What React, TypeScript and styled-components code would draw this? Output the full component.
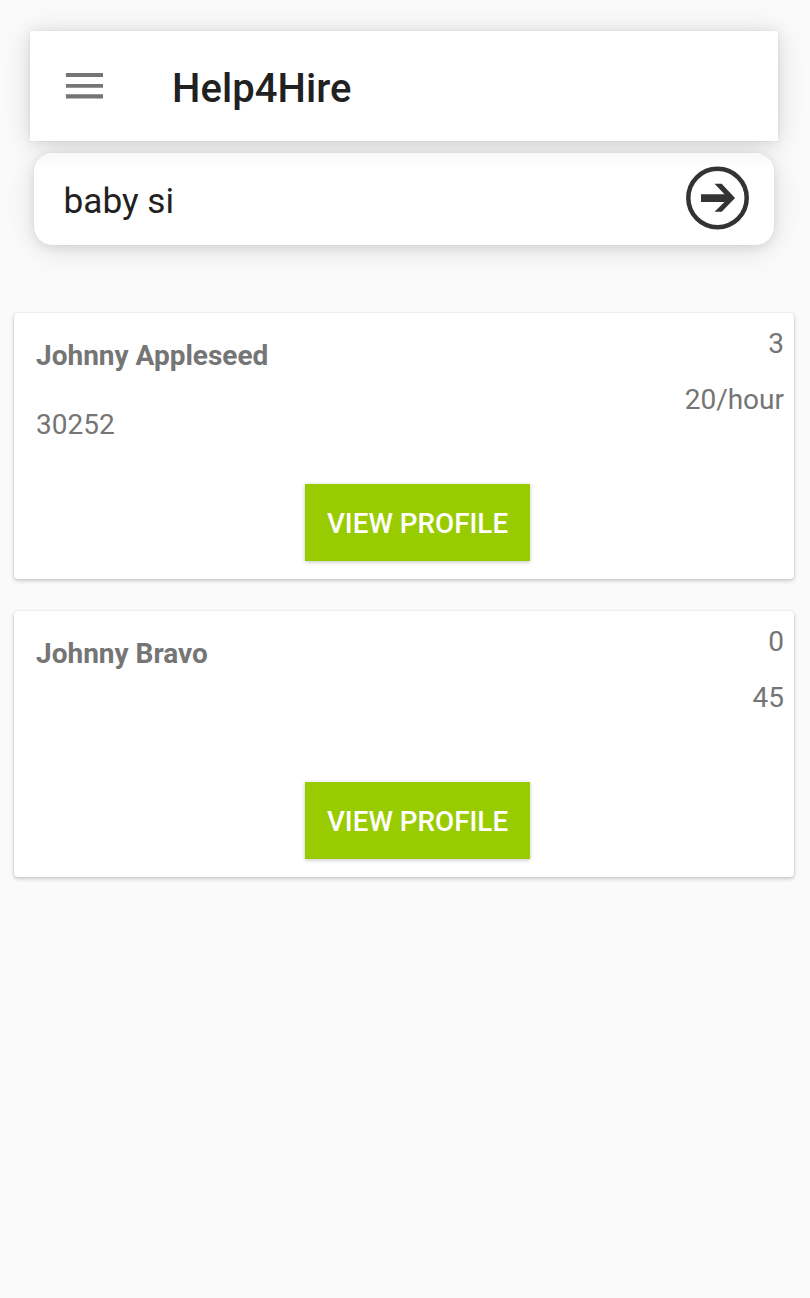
import React from "react";
import styled, { createGlobalStyle } from "styled-components";

const GlobalStyle = createGlobalStyle`
  * { box-sizing: border-box; }
  body { margin: 0; background: #fafafa; font-family: Roboto, sans-serif; }
`;

const Screen = styled.main`
  min-height: 1298px;
  padding: 31px 16px 0 14px;
  background: #fafafa;
  overflow: hidden;
`;

const TopArea = styled.div`
  isolation: isolate;
  display: flex;
  flex-direction: column;
  align-items: stretch;
  gap: 12px;
  margin: 0 16px 68px 16px;
`;

const AppBar = styled.header`
  position: relative;
  display: flex;
  align-items: center;
  height: 110px;
  padding: 6px 35px 0;
  background: #fff;

  &::before {
    content: "";
    position: absolute;
    inset: 0;
    z-index: -1;
    box-shadow: 0 0 0 1px rgba(0, 0, 0, 0.02), 0 1px 12px rgba(0, 0, 0, 0.09), 0 3px 30px rgba(0, 0, 0, 0.11);
  }
`;

const MenuButton = styled.button`
  display: flex;
  width: 38px;
  height: 28px;
  margin: 0 69px 6px 0;
  padding: 0;
  border: 0;
  background: none;
`;

const Title = styled.h1`
  margin: 0;
  color: #212121;
  font-size: 40px;
  font-weight: 500;
  line-height: 48px;
  letter-spacing: 0.06px;
`;

const SearchBar = styled.div`
  position: relative;
  display: flex;
  align-items: center;
  justify-content: space-between;
  height: 92px;
  margin: 0 4px;
  padding: 0 25px 0 29.5px;
  border-radius: 19px;
  background: linear-gradient(#f8f8f8, #fff 14px);

  &::before {
    content: "";
    position: absolute;
    inset: 0;
    z-index: -1;
    border-radius: 19px;
    box-shadow: 0 0 2px rgba(0, 0, 0, 0.05), 0 3px 12px rgba(0, 0, 0, 0.09), 0 4px 30px rgba(0, 0, 0, 0.11);
  }
`;

const Query = styled.span`
  padding-top: 3px;
  color: #212121;
  font-size: 35.2px;
  line-height: 44px;
`;

const GoButton = styled.button`
  display: flex;
  width: 63px;
  height: 64px;
  margin-bottom: 2px;
  padding: 0;
  border: 0;
  background: none;
`;

const Results = styled.section`
  display: flex;
  flex-direction: column;
  gap: 32px;
`;

const Card = styled.article`
  display: flex;
  flex-direction: column;
  align-items: center;
  justify-content: space-between;
  height: 266px;
  padding: 14px 10px 18px 22px;
  border-radius: 4px;
  background: #fff;
  box-shadow: 0 0 2px rgba(0, 0, 0, 0.14), 0 2px 4px rgba(0, 0, 0, 0.18);
  color: #757575;
  font-size: 28px;
  line-height: 33px;
`;

const Details = styled.div`
  display: flex;
  justify-content: space-between;
  align-self: stretch;
`;

const Column = styled.div<{ $end?: boolean }>`
  display: flex;
  flex-direction: column;
  gap: ${(p) => (p.$end ? 23 : 36)}px;
  padding-top: ${(p) => (p.$end ? 0 : 12)}px;
  text-align: ${(p) => (p.$end ? "right" : "left")};
`;

const Name = styled.strong`
  font-weight: 700;
`;

const ProfileButton = styled.button`
  width: 225px;
  height: 77px;
  margin-left: 15px;
  padding: 1px 0 0;
  border: 0;
  background: #99cc00;
  box-shadow: 0 1px 4px rgba(0, 0, 0, 0.24);
  color: #fff;
  font: 500 27.8px/33px Roboto, sans-serif;
  text-transform: uppercase;
  white-space: nowrap;
`;

const workers = [
  { name: "Johnny Appleseed", zip: "30252", score: "3", rate: "20/hour" },
  { name: "Johnny Bravo", zip: "", score: "0", rate: "45" },
];

export default function App() {
  return (
    <>
      <GlobalStyle />
      <Screen>
        <TopArea>
          <AppBar>
            <MenuButton aria-label="Menu">
              <svg width="38" height="28" viewBox="0 0 38 28" fill="#757575">
                <path d="M.9 1H38v4H.9zM.9 12H38v3.700H.9zM.9 22.200H38v4.400H.9z" />
              </svg>
            </MenuButton>
            <Title>Help4Hire</Title>
          </AppBar>
          <SearchBar>
            <Query>baby si</Query>
            <GoButton aria-label="Search">
              <svg width="63" height="64" viewBox="0 0 63 64">
                <circle cx="31.5" cy="32" r="29.2" fill="none" stroke="#333" strokeWidth="4.5" />
                <path d="M15 28.200h23.500l-10-10.400h7.200L49 32 35.700 45.700h-7.200l10-9.700H15z" fill="#333" />
              </svg>
            </GoButton>
          </SearchBar>
        </TopArea>
        <Results>
          {workers.map((w) => (
            <Card key={w.name}>
              <Details>
                <Column>
                  <Name>{w.name}</Name>
                  {w.zip && <span>{w.zip}</span>}
                </Column>
                <Column $end>
                  <span>{w.score}</span>
                  <span>{w.rate}</span>
                </Column>
              </Details>
              <ProfileButton>View Profile</ProfileButton>
            </Card>
          ))}
        </Results>
      </Screen>
    </>
  );
}
